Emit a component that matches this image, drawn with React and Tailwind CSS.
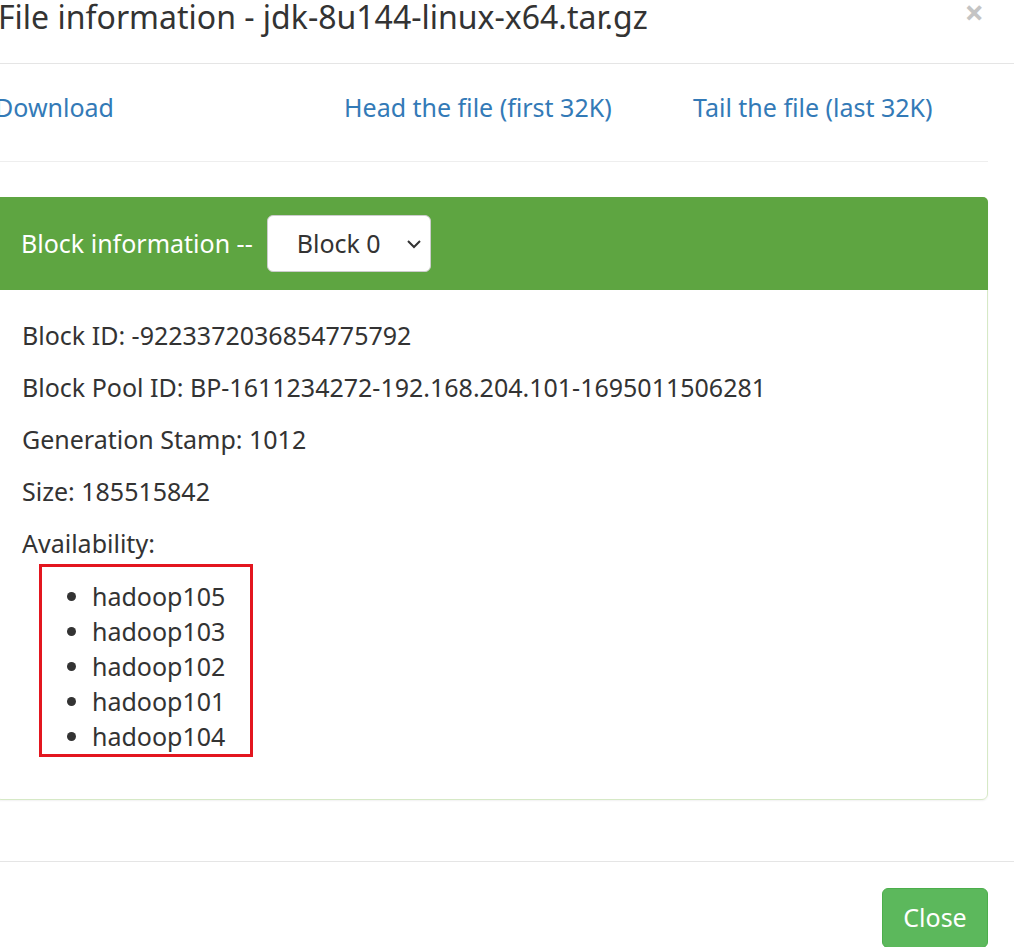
import React, { useState } from 'react';

const font = { fontFamily: '"Noto Sans", "Open Sans", sans-serif' };

export default function App() {
  const [block, setBlock] = useState('0');
  const hosts = ['hadoop105', 'hadoop103', 'hadoop102', 'hadoop101', 'hadoop104'];

  return (
    <div className="w-[1014px] h-[947px] overflow-hidden bg-white text-[#333]" style={font}>
      {/* HEADER */}
      <div className="h-[64px] border-b border-[#e5e5e5] flex justify-between">
        <h4 className="-ml-[2px] -mt-[3px] text-[32px] leading-[40px] text-[#333]">
          File information - jdk-8u144-linux-x64.tar.gz
        </h4>
        <button className="mr-[30px] -mt-[6px] h-[36px] text-[34px] font-bold leading-[36px] text-[#c4c4c4]">
          ×
        </button>
      </div>

      {/* BODY */}
      <div className="-ml-[5px] w-[993px]">
        <div className="h-[97px] pb-[10px] flex items-center text-[25px] text-[#337ab7]">
          <a className="w-[349px]">Download</a>
          <a className="w-[349px]">Head the file (first 32K)</a>
          <a>Tail the file (last 32K)</a>
        </div>
        <div className="border-t border-[#eee]" />

        <div className="mt-[35px] border border-[#d6e9c6] rounded-[6px] shadow-[0_1px_2px_rgba(0,0,0,0.06)]">
          <div className="h-[93px] bg-[#5ea541] rounded-t-[5px] flex items-center pl-[26px] -mt-px -mx-px">
            <span className="text-[25px] text-white mr-[14px]">Block information --</span>
            <div className="relative">
              <select
                value={block}
                onChange={(e) => setBlock(e.target.value)}
                className="appearance-none w-[164px] h-[57px] bg-white border border-[#ccc] rounded-[6px] pl-[29px] text-[25px] text-[#333] outline-none"
                style={font}
              >
                <option value="0">Block 0</option>
                <option value="1">Block 1</option>
              </select>
              <svg className="absolute right-[9px] top-[24px] pointer-events-none" width="16" height="10" viewBox="0 0 16 10">
                <path d="M2 2 L8 8 L14 2" fill="none" stroke="#333" strokeWidth="2" />
              </svg>
            </div>
          </div>

          <div className="px-[26px] pt-[28px] pb-[26px] text-[25px] leading-[35px]">
            <p className="mb-[17px]">Block ID: -9223372036854775792</p>
            <p className="mb-[17px]">Block Pool ID: BP-1611234272-192.168.204.101-1695011506281</p>
            <p className="mb-[17px]">Generation Stamp: 1012</p>
            <p className="mb-[17px]">Size: 185515842</p>
            <p className="mb-[3px]">Availability:</p>
            <div className="ml-[17px] w-[214px] border-[3px] border-[#e3161f] pt-[12px] pb-[0px]">
              <ul className="list-disc pl-[50px] marker:text-[#333]">
                {hosts.map(h => (
                  <li key={h}>{h}</li>
                ))}
              </ul>
            </div>
            <div className="h-[16px]" />
          </div>
        </div>
      </div>

      {/* FOOTER */}
      <div className="mt-[61px] border-t border-[#e5e5e5] pt-[26px] pr-[26px] flex justify-end">
        <button className="w-[106px] h-[60px] bg-[#5cb85c] border border-[#4cae4c] rounded-[6px] text-white text-[25px]">
          Close
        </button>
      </div>
    </div>
  );
}
